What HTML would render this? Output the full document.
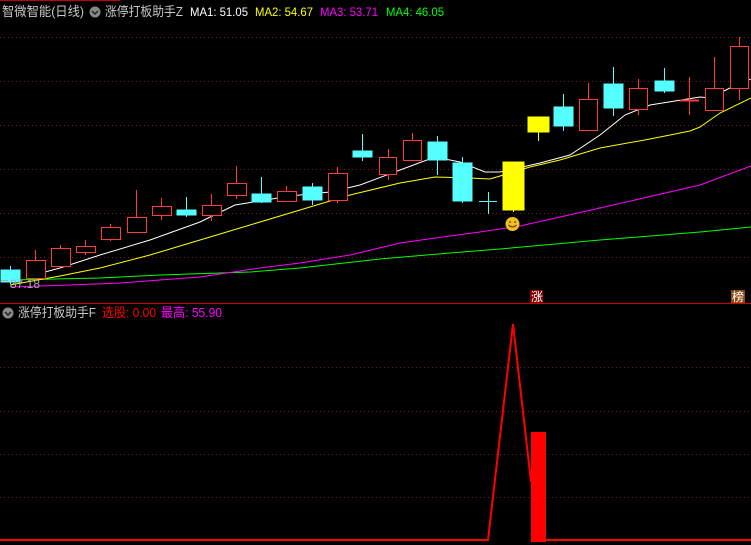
<!DOCTYPE html>
<html><head><meta charset="utf-8"><style>
html,body{margin:0;padding:0;background:#000;width:751px;height:545px;overflow:hidden}
svg{display:block}
text{font-family:"Liberation Sans","Noto Sans CJK SC",sans-serif;font-size:12px}
</style></head><body>
<svg width="751" height="545" xmlns="http://www.w3.org/2000/svg">
<rect width="751" height="545" fill="#000"/>
<line x1="0" y1="0.5" x2="120" y2="0.5" stroke="#c00000"/>
<g stroke="#7a1a1a" stroke-dasharray="1,3">
<line x1="0" y1="37.5" x2="751" y2="37.5"/><line x1="0" y1="81.5" x2="751" y2="81.5"/>
<line x1="0" y1="125.5" x2="751" y2="125.5"/><line x1="0" y1="169.5" x2="751" y2="169.5"/>
<line x1="0" y1="213.5" x2="751" y2="213.5"/><line x1="0" y1="257.5" x2="751" y2="257.5"/>
<line x1="0" y1="367.5" x2="751" y2="367.5"/><line x1="0" y1="411.5" x2="751" y2="411.5"/>
<line x1="0" y1="454.5" x2="751" y2="454.5"/><line x1="0" y1="497.5" x2="751" y2="497.5"/>
</g>
<line x1="0" y1="303.5" x2="751" y2="303.5" stroke="#d00000"/>
<polyline fill="none" stroke="#00ff00" points="10,280 100,278 160,275 250,272 300,268 380,259 450,253 500,249 600,240 700,232 751,227"/>
<polyline fill="none" stroke="#ff00ff" points="10,287 70,285 120,283 160,280 200,277 260,268 300,263 350,255 400,243 450,236 480,232 520,226 600,208 700,185 751,166"/>
<polyline fill="none" stroke="#ffff00" points="10,285 60,276 100,268 150,255 200,240 250,225 300,210 350,195 400,183 435,177 470,178 490,179 530,167 560,160 600,148 650,139 690,131 700,127 720,113 751,98"/>
<polyline fill="none" stroke="#ffffff" points="30,276 60,268 100,255 150,240 200,222 235,205 290,196 330,192 360,185 400,170 435,157 460,162 485,172 500,172 540,163 570,155 600,135 625,115 650,105 700,97 710,98 730,88 751,79"/>
<g stroke="#ff3a3a" fill="#000" stroke-width="1">
<line x1="35.5" y1="250" x2="35.5" y2="260"/><rect x="26.5" y="260.5" width="19" height="18"/>
<line x1="60.5" y1="245" x2="60.5" y2="248"/><rect x="51.5" y="248.5" width="19" height="18"/>
<line x1="85.5" y1="240" x2="85.5" y2="255"/><rect x="76.5" y="246.5" width="19" height="6"/>
<line x1="110.5" y1="224" x2="110.5" y2="241"/><rect x="101.5" y="227.5" width="19" height="12"/>
<line x1="136.5" y1="190" x2="136.5" y2="217"/><rect x="127.5" y="217.5" width="19" height="15"/>
<line x1="161.5" y1="198" x2="161.5" y2="220"/><rect x="152.5" y="206.5" width="19" height="9"/>
<line x1="211.5" y1="194" x2="211.5" y2="221"/><rect x="202.5" y="205.5" width="19" height="10"/>
<line x1="236.5" y1="166" x2="236.5" y2="199"/><rect x="227.5" y="183.5" width="19" height="12"/>
<line x1="286.5" y1="186" x2="286.5" y2="191"/><rect x="277.5" y="191.5" width="19" height="10"/>
<line x1="337.5" y1="167" x2="337.5" y2="203"/><rect x="328.5" y="173.5" width="19" height="27"/>
<line x1="388.5" y1="149" x2="388.5" y2="180"/><rect x="379.5" y="157.5" width="17" height="17"/>
<line x1="412.5" y1="133" x2="412.5" y2="140"/><rect x="403.5" y="140.5" width="18" height="20"/>
<line x1="588.5" y1="83" x2="588.5" y2="99"/><rect x="579.5" y="99.5" width="18" height="31"/>
<line x1="638.5" y1="79" x2="638.5" y2="115"/><rect x="629.5" y="88.5" width="18" height="21"/>
<line x1="689.5" y1="77" x2="689.5" y2="115"/><line x1="680" y1="100.5" x2="699" y2="100.5" stroke-width="2"/>
<line x1="714.5" y1="57" x2="714.5" y2="88"/><rect x="705.5" y="88.5" width="18" height="22"/>
<line x1="739.5" y1="37" x2="739.5" y2="100"/><rect x="730.5" y="46.5" width="18" height="42"/>
</g>
<g stroke="#55ffff" fill="#55ffff">
<line x1="10.5" y1="266" x2="10.5" y2="284"/><rect x="1" y="270" width="19" height="12"/>
<line x1="186.5" y1="197" x2="186.5" y2="217"/><rect x="177" y="210" width="19" height="5"/>
<line x1="261.5" y1="177" x2="261.5" y2="203"/><rect x="252" y="194" width="19" height="8"/>
<line x1="312.5" y1="183" x2="312.5" y2="205"/><rect x="303" y="187" width="19" height="13"/>
<line x1="362.5" y1="134" x2="362.5" y2="161"/><rect x="353" y="151" width="19" height="6"/>
<line x1="437.5" y1="136" x2="437.5" y2="175"/><rect x="428" y="142" width="19" height="18"/>
<line x1="462.5" y1="157" x2="462.5" y2="203"/><rect x="453" y="163" width="19" height="38"/>
<line x1="488.5" y1="192" x2="488.5" y2="214"/><line x1="479" y1="201.5" x2="497" y2="201.5"/>
<line x1="563.5" y1="94" x2="563.5" y2="131"/><rect x="554" y="107" width="19" height="19"/>
<line x1="613.5" y1="67" x2="613.5" y2="116"/><rect x="604" y="84" width="19" height="24"/>
<line x1="664.5" y1="68" x2="664.5" y2="93"/><rect x="655" y="81" width="19" height="10"/>
</g>
<g stroke="#ffff00" fill="#ffff00">
<line x1="513.5" y1="162" x2="513.5" y2="212"/><rect x="503" y="162" width="21" height="48"/>
<line x1="538.5" y1="130" x2="538.5" y2="141"/><rect x="528" y="117" width="21" height="15"/>
</g>
<circle cx="512.5" cy="224" r="7" fill="#f0c020"/>
<circle cx="510" cy="222" r="0.9" fill="#553300"/><circle cx="515" cy="222" r="0.9" fill="#553300"/>
<path d="M508.5 225 Q512.5 229 516.5 225" stroke="#553300" fill="none"/>
<line x1="1" y1="280.5" x2="8" y2="280.5" stroke="#aaa"/>
<text x="10" y="288" fill="#aaaaaa">37.18</text>
<rect x="530" y="290" width="13" height="13" fill="#800000"/>
<text x="531" y="301" fill="#fff" font-size="11">涨</text>
<rect x="731" y="290" width="14" height="13" fill="#8a4a10"/>
<text x="732" y="301" fill="#fff" font-size="11">榜</text>
<text x="2" y="16" fill="#c8c8c8" textLength="82" lengthAdjust="spacingAndGlyphs" style="font-size:13px">智微智能(日线)</text>
<circle cx="95" cy="12" r="5.5" fill="#888"/><path d="M92 11 L95 14 L98 11" stroke="#222" stroke-width="1.5" fill="none"/>
<text x="105" y="16" fill="#c8c8c8" textLength="78" lengthAdjust="spacingAndGlyphs" style="font-size:13px">涨停打板助手Z</text>
<text x="190" y="16" fill="#ffffff" textLength="58" lengthAdjust="spacingAndGlyphs">MA1: 51.05</text>
<text x="255" y="16" fill="#ffff00" textLength="58" lengthAdjust="spacingAndGlyphs">MA2: 54.67</text>
<text x="320" y="16" fill="#ff00ff" textLength="58" lengthAdjust="spacingAndGlyphs">MA3: 53.71</text>
<text x="386" y="16" fill="#00ff00" textLength="58" lengthAdjust="spacingAndGlyphs">MA4: 46.05</text>
<circle cx="8" cy="313" r="5.5" fill="#888"/><path d="M5 312 L8 315 L11 312" stroke="#222" stroke-width="1.5" fill="none"/>
<text x="18" y="317" fill="#c8c8c8" textLength="78" lengthAdjust="spacingAndGlyphs" style="font-size:13px">涨停打板助手F</text>
<text x="102" y="317" fill="#ff0000" textLength="54" lengthAdjust="spacingAndGlyphs" style="font-size:13px">选股: 0.00</text>
<text x="161" y="317" fill="#ff00ff" textLength="61" lengthAdjust="spacingAndGlyphs" style="font-size:13px">最高: 55.90</text>
<polyline fill="none" stroke="#ff0000" stroke-width="2" points="0,540 488,540 513,324 531,482"/>
<rect x="531" y="432" width="15" height="110" fill="#ff0000"/>
<line x1="546" y1="540" x2="751" y2="540" stroke="#ff0000" stroke-width="2"/>
</svg>
</body></html>
